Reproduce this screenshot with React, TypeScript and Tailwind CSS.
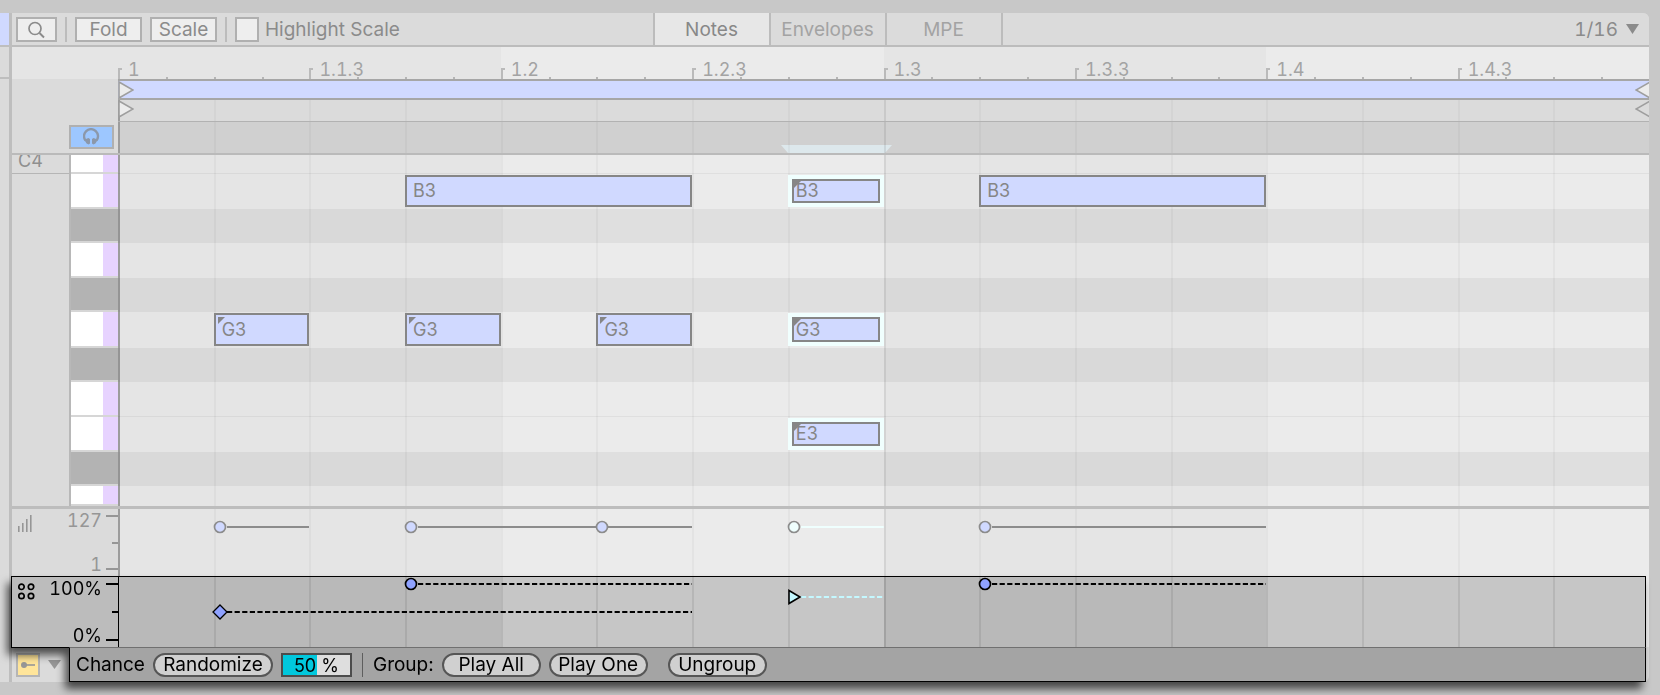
import { useState } from "react";
import type { ReactNode } from "react";

type MarkerShape = "circle" | "diamond" | "triangle";

interface Note {
    name: string;
    start: number;
    length: number;
    chance?: boolean;
    selected?: boolean;
}

interface KeyRow {
    id: string;
    height: string;
    black?: boolean;
    notes?: Note[];
}

interface LaneEvent {
    start: number;
    end: number;
    y: number;
    shape: MarkerShape;
    selected?: boolean;
}

const STEPS = 16;

const RULER_LABELS = ["1", "1.1.3", "1.2", "1.2.3", "1.3", "1.3.3", "1.4", "1.4.3"];

const ROWS: KeyRow[] = [
    { id: "C4", height: "h-[19px]" },
    {
        id: "B3",
        height: "h-[35px]",
        notes: [
            { name: "B3", start: 3, length: 3 },
            { name: "B3", start: 7, length: 1, chance: true, selected: true },
            { name: "B3", start: 9, length: 3 },
        ],
    },
    { id: "A#3", height: "h-[34px]", black: true },
    { id: "A3", height: "h-[35px]" },
    { id: "G#3", height: "h-[34px]", black: true },
    {
        id: "G3",
        height: "h-9",
        notes: [
            { name: "G3", start: 1, length: 1, chance: true },
            { name: "G3", start: 3, length: 1, chance: true },
            { name: "G3", start: 5, length: 1, chance: true },
            { name: "G3", start: 7, length: 1, chance: true, selected: true },
        ],
    },
    { id: "F#3", height: "h-[34px]", black: true },
    { id: "F3", height: "h-[35px]" },
    {
        id: "E3",
        height: "h-[35px]",
        notes: [{ name: "E3", start: 7, length: 1, chance: true, selected: true }],
    },
    { id: "D#3", height: "h-[34px]", black: true },
    { id: "D3", height: "h-5" },
];

const VELOCITY: LaneEvent[] = [
    { start: 1, end: 2, y: 18, shape: "circle" },
    { start: 3, end: 6, y: 18, shape: "circle" },
    { start: 5, end: 6, y: 18, shape: "circle" },
    { start: 7, end: 8, y: 18, shape: "circle", selected: true },
    { start: 9, end: 12, y: 18, shape: "circle" },
];

const CHANCE: LaneEvent[] = [
    { start: 1, end: 6, y: 35, shape: "diamond" },
    { start: 3, end: 6, y: 7, shape: "circle" },
    { start: 7, end: 8, y: 20, shape: "triangle", selected: true },
    { start: 9, end: 12, y: 7, shape: "circle" },
];

const pct = (steps: number) => `${(steps / STEPS) * 100}%`;

/** Vertical step lines, optionally with alternating beat shading. */
function StepGrid({ tone }: { tone: "plain" | "light" | "dark" }) {
    return (
        <div className="absolute inset-0 grid grid-cols-16" aria-hidden="true">
            {Array.from({ length: STEPS }, (_, i) => {
                const odd = Math.floor(i / 4) % 2 === 1;
                let fill = "";
                if (tone === "light") fill = odd ? "bg-[#ebebeb]" : "bg-[#e5e5e5]";
                if (tone === "dark") fill = odd ? "bg-[#c6c6c6]" : "bg-[#b9b9b9]";
                let line = i === 8 ? "border-black/8" : "border-black/3";
                if (tone === "dark") line = i === 8 ? "border-black/12" : "border-black/8";
                if (i === 0) line = tone === "dark" ? "border-black" : "border-[#9c9c9c]";
                return (
                    <div
                        key={i}
                        className={`${i === 0 && tone === "dark" ? "border-l" : "border-l-2"} ${line} ${fill}`}
                    />
                );
            })}
        </div>
    );
}

function Flag({ side, filled = true }: { side: "left" | "right"; filled?: boolean }) {
    return (
        <svg
            width="16"
            height="18"
            viewBox="0 0 16 18"
            className={side === "right" ? "rotate-180" : ""}
            aria-hidden="true"
        >
            <path
                d="M1 1 L15 9 L1 17 Z"
                fill={filled ? "#ececec" : "none"}
                stroke="#9e9e9e"
                strokeWidth="1.6"
            />
        </svg>
    );
}

function Divider() {
    return <div className="h-[25px] w-0.5 bg-[#bcbcbc]" />;
}

function Toolbar() {
    const [tab, setTab] = useState("Notes");
    const box = "h-[25px] border-2 border-[#b0b0b0] bg-[#eeeeee]";

    return (
        <div className="flex items-start rounded-tr-md border-b-2 border-[#bcbcbc] bg-[#dbdbdb] leading-[21px] text-[#8b8b8b]">
            <div className="flex flex-1 items-center gap-2 pt-1 pl-1">
                <button
                    type="button"
                    aria-label="Search"
                    className={`${box} flex w-[41px] items-center justify-center`}
                >
                    <svg width="18" height="18" viewBox="0 0 18 18" fill="none" aria-hidden="true">
                        <circle cx="7" cy="7.5" r="6" stroke="#8b8b8b" strokeWidth="1.7" />
                        <path d="M11.5 12 L16 16.5" stroke="#8b8b8b" strokeWidth="1.9" />
                    </svg>
                </button>
                <Divider />
                <button type="button" className={`${box} w-[67px]`}>
                    Fold
                </button>
                <button type="button" className={`${box} w-[67px]`}>
                    Scale
                </button>
                <Divider />
                <label className="flex items-center gap-1.5">
                    <input type="checkbox" className={`${box} w-6 appearance-none`} />
                    Highlight Scale
                </label>
            </div>
            <div className="flex border-l-2 border-[#bcbcbc]" role="tablist">
                {["Notes", "Envelopes", "MPE"].map((name) => (
                    <button
                        key={name}
                        type="button"
                        role="tab"
                        aria-selected={tab === name}
                        onClick={() => setTab(name)}
                        className={`h-8 w-[116px] border-r-2 border-[#bcbcbc] ${
                            tab === name ? "bg-[#e7e7e7] text-[#888888]" : "text-[#a3a3a3]"
                        }`}
                    >
                        {name}
                    </button>
                ))}
            </div>
            <div className="flex h-8 flex-1 items-center justify-end gap-2 pr-2.5">
                <select
                    aria-label="Grid"
                    defaultValue="1/16"
                    className="w-12 appearance-none text-right tabular-nums"
                >
                    <option>1/8</option>
                    <option>1/16</option>
                    <option>1/32</option>
                </select>
                <svg width="13" height="10" viewBox="0 0 13 10" aria-hidden="true">
                    <path d="M0 0 H13 L6.5 10 Z" fill="#8b8b8b" />
                </svg>
            </div>
        </div>
    );
}

function Ruler() {
    return (
        <div className="flex h-8 bg-[#e5e5e5]">
            <div className="w-[106px] shrink-0" />
            <div className="grid flex-1 grid-cols-8">
                {RULER_LABELS.map((label, i) => (
                    <div
                        key={label}
                        className={`relative flex flex-col justify-end pl-2.5 text-[18px] text-[#a3a3a3] tabular-nums ${
                            Math.floor(i / 2) % 2 === 1 ? "bg-[#ebebeb]" : "bg-[#e5e5e5]"
                        }`}
                    >
                        <span className="leading-[19px]">{label}</span>
                        <span className="absolute bottom-0 left-0 h-[11px] w-1 border-t-2 border-l-2 border-[#bababa]" />
                        {["left-1/4", "left-1/2", "left-3/4"].map((pos) => (
                            <span
                                key={pos}
                                className={`absolute bottom-0 ${pos} h-0.5 w-0.5 bg-[#b5b5b5]`}
                            />
                        ))}
                    </div>
                ))}
            </div>
        </div>
    );
}

function LoopArea() {
    return (
        <div className="flex">
            <div className="flex w-[106px] shrink-0 items-end justify-end border-b-2 border-[#bababa] pr-1 pb-1">
                <button
                    type="button"
                    aria-label="Preview"
                    className="flex h-6 w-[45px] items-center justify-center border-2 border-[#b0b0b0] bg-[#9dc7ff]"
                >
                    <svg width="18" height="18" viewBox="0 0 18 18" fill="none" aria-hidden="true">
                        <path
                            d="M2.6 12.6 A7 7 0 1 1 13.4 12.6"
                            stroke="#8c98aa"
                            strokeWidth="2.4"
                        />
                        <path
                            d="M1.2 11.8 L5.4 10 L7 11 V15.6 L5.6 16.6 L3.6 15.4 Z M14.8 11.8 L10.6 10 L9 11 V15.6 L10.4 16.6 L12.4 15.4 Z"
                            fill="#8c98aa"
                        />
                    </svg>
                </button>
            </div>
            <div className="flex-1">
                <div className="flex h-[21px] items-center justify-between overflow-hidden border-y-2 border-[#a6a6a6] bg-[#d0d9ff]">
                    <Flag side="left" />
                    <div className="-mr-0.5 flex">
                        <Flag side="right" />
                    </div>
                </div>
                <div className="relative h-[22px] border-b border-[#b2b2b2] bg-[#dbdbdb]">
                    <StepGrid tone="plain" />
                    <div className="relative flex h-full items-start justify-between overflow-hidden">
                        <Flag side="left" />
                        <div className="-mr-0.5 flex">
                            <Flag side="right" filled={false} />
                        </div>
                    </div>
                </div>
                <div className="relative h-[33px] border-b-2 border-[#bababa] bg-[#d0d0d0]">
                    <div
                        className="absolute bottom-0 flex h-2 bg-[#dde8ec]"
                        style={{ left: pct(7), width: pct(1) }}
                    >
                        <svg
                            width="8"
                            height="8"
                            viewBox="0 0 8 8"
                            className="absolute right-full"
                            aria-hidden="true"
                        >
                            <path d="M1 0 H8 V8 Z" fill="#dde8ec" />
                        </svg>
                        <svg
                            width="8"
                            height="8"
                            viewBox="0 0 8 8"
                            className="absolute left-full"
                            aria-hidden="true"
                        >
                            <path d="M0 0 H8 L1 8 H0 Z" fill="#dde8ec" />
                        </svg>
                    </div>
                    <StepGrid tone="plain" />
                </div>
            </div>
        </div>
    );
}

function NoteBlock({ note }: { note: Note }) {
    return (
        <div
            className={`absolute top-px bottom-0.5 ${note.selected ? "border-4 border-[#f0fffe]" : ""}`}
            style={{ left: pct(note.start), width: pct(note.length) }}
        >
            <div
                className={`relative flex h-full items-center border-2 border-[#868686] bg-[#d0d9ff] text-[18px] leading-5 text-[#868686] ${
                    note.selected ? "pl-0.5" : "pl-1.5"
                }`}
            >
                {note.chance && (
                    <svg
                        width="8"
                        height="8"
                        viewBox="0 0 8 8"
                        className={`absolute ${note.selected ? "top-0 left-0" : "top-0.5 left-0.5"}`}
                        aria-hidden="true"
                    >
                        <path d="M0 0 H7 L0 7 Z" fill="#868686" />
                    </svg>
                )}
                <span className="relative">{note.name}</span>
            </div>
        </div>
    );
}

function PianoRoll() {
    return (
        <div className="flex border-b-[3px] border-[#bdbdbd]">
            <div className="w-[57px] shrink-0 text-[#8f8f8f]">
                <div className="flex h-[19px] items-end overflow-hidden border-b border-[#b5b5b5] pl-1.5 text-[18px] leading-5">
                    <span className="pb-0.5">C4</span>
                </div>
            </div>
            <div className="flex w-[49px] shrink-0 flex-col border-l-2 border-[#b8b8b8]">
                {ROWS.map((row) => (
                    <div
                        key={row.id}
                        className={`${row.height} flex border-b-2 border-[#d6d6d6] ${
                            row.black ? "bg-[#b3b3b3]" : "bg-white"
                        }`}
                    >
                        {!row.black && <div className="ml-auto h-full w-[15px] bg-[#e7d3ff]" />}
                    </div>
                ))}
            </div>
            <div className="relative flex-1">
                <StepGrid tone="light" />
                {ROWS.map((row) => (
                    <div
                        key={row.id}
                        className={`${row.height} relative ${row.black ? "bg-black/5" : ""} ${
                            row.id === "C4" || row.id === "F3" ? "border-b border-black/5" : ""
                        }`}
                    >
                        {row.notes?.map((note) => (
                            <NoteBlock key={note.start} note={note} />
                        ))}
                    </div>
                ))}
            </div>
        </div>
    );
}

function Marker({ shape, fill, stroke }: { shape: MarkerShape; fill: string; stroke: string }) {
    return (
        <svg
            width="16"
            height="16"
            viewBox="0 0 16 16"
            className="absolute -top-2 -left-0.5"
            aria-hidden="true"
        >
            {shape === "circle" && (
                <circle cx="8" cy="8" r="5.5" fill={fill} stroke={stroke} strokeWidth="1.7" />
            )}
            {shape === "diamond" && (
                <path d="M8 1 L15 8 L8 15 L1 8 Z" fill={fill} stroke={stroke} strokeWidth="1.3" />
            )}
            {shape === "triangle" && (
                <path d="M3 1.5 L14 8 L3 14.5 Z" fill={fill} stroke={stroke} strokeWidth="1.6" />
            )}
        </svg>
    );
}

function LaneEvents({ events, dashed }: { events: LaneEvent[]; dashed?: boolean }) {
    return (
        <>
            {events.map((event) => {
                const stroke = dashed ? "#000000" : "#8c8c8c";
                const fill = dashed ? "#8fa2ff" : "#d0d9ff";
                const pale = dashed ? "#c4f8ff" : "#effffe";
                return (
                    <div
                        key={`${event.start}-${event.y}`}
                        className="absolute"
                        style={{
                            left: pct(event.start),
                            width: pct(event.end - event.start),
                            top: event.y,
                        }}
                    >
                        <svg
                            width="100%"
                            height="2"
                            className="absolute -top-px left-0"
                            aria-hidden="true"
                        >
                            <line
                                x1="13"
                                y1="1"
                                x2="100%"
                                y2="1"
                                stroke={event.selected ? pale : stroke}
                                strokeWidth="1.8"
                                strokeDasharray={dashed ? "5.2 2.4" : undefined}
                            />
                        </svg>
                        <Marker
                            shape={event.shape}
                            fill={event.selected ? pale : fill}
                            stroke={stroke}
                        />
                    </div>
                );
            })}
        </>
    );
}

function LaneScale({
    icon,
    max,
    min,
    className,
}: {
    icon: ReactNode;
    max: string;
    min: string;
    className: string;
}) {
    return (
        <div className={`flex w-[106px] shrink-0 justify-between ${className}`}>
            <div className="pt-1.5 pl-1.5">{icon}</div>
            <div className="flex">
                <div className="flex flex-col justify-between pt-px pr-1 text-right text-[18px] leading-[22px] tabular-nums">
                    <span>{max}</span>
                    <span>{min}</span>
                </div>
                <div className="flex flex-col items-end justify-between py-1.5">
                    <span className="h-0.5 w-3 bg-current" />
                    <span className="h-0.5 w-1.5 bg-current" />
                    <span className="h-0.5 w-3 bg-current" />
                </div>
            </div>
        </div>
    );
}

function VelocityLane() {
    return (
        <div className="flex h-[67px]">
            <LaneScale
                className="text-[#969696]"
                max="127"
                min="1"
                icon={
                    <svg width="14" height="17" viewBox="0 0 14 17" aria-hidden="true">
                        <path
                            d="M0 11 h1.6 v6 h-1.6 Z M4 8 h1.6 v9 h-1.6 Z M8 4 h1.6 v13 h-1.6 Z M12 0 h1.6 v17 h-1.6 Z"
                            fill="#969696"
                        />
                    </svg>
                }
            />
            <div className="relative flex-1">
                <StepGrid tone="light" />
                <LaneEvents events={VELOCITY} />
            </div>
        </div>
    );
}

function ChanceLane() {
    return (
        <div className="-ml-px overflow-hidden border-x border-t border-black bg-[#bcbcbc]">
            <div className="flex h-[70px] w-[calc(100%+4px)]">
                <LaneScale
                    className="text-black"
                    max="100%"
                    min="0%"
                    icon={
                        <svg width="17" height="17" viewBox="0 0 17 17" fill="none" aria-hidden="true">
                            <g stroke="#000000" strokeWidth="1.7">
                                <circle cx="3.5" cy="3.8" r="2.7" />
                                <circle cx="13" cy="3.8" r="2.7" />
                                <circle cx="3.5" cy="13" r="2.7" />
                                <circle cx="13" cy="13" r="2.7" />
                            </g>
                        </svg>
                    }
                />
                <div className="relative flex-1">
                    <StepGrid tone="dark" />
                    <LaneEvents events={CHANCE} dashed />
                </div>
            </div>
        </div>
    );
}

function Pill({ children, wide }: { children: ReactNode; wide?: boolean }) {
    return (
        <button
            type="button"
            className={`h-6 rounded-full border-2 border-[#565656] bg-[#d0d0d0] leading-5 ${
                wide ? "w-[120px]" : "w-[99px]"
            }`}
        >
            {children}
        </button>
    );
}

function ChanceControls() {
    const [amount, setAmount] = useState("50 %");
    const level = Math.min(100, Math.max(0, parseInt(amount, 10) || 0));

    return (
        <div className="flex h-[35px] flex-1 items-center gap-2 border border-t-[#707070] border-r-black border-b-black border-l-black bg-[#a4a4a4] pt-px pl-1.5 text-black">
            <span>Chance</span>
            <Pill wide>Randomize</Pill>
            <input
                type="text"
                aria-label="Randomize amount"
                value={amount}
                onChange={(e) => setAmount(e.target.value)}
                className="h-6 w-[71px] border-2 border-[#4c4c4c] text-center text-[18px] leading-5"
                style={{
                    backgroundImage: `linear-gradient(to right, #00c8dd ${level}%, #dedede ${level}%)`,
                }}
            />
            <div className="mx-0.5 h-6 w-px bg-[#5e5e5e]" />
            <span>Group:</span>
            <Pill>Play All</Pill>
            <Pill>Play One</Pill>
            <div className="ml-3 flex">
                <Pill>Ungroup</Pill>
            </div>
        </div>
    );
}

/** Chance lane and its control bar, raised above the rest of the editor. */
function ChanceSection() {
    return (
        <div className="grid grid-cols-[57px_1fr] grid-rows-[1fr_auto]">
            <div className="col-span-2 col-start-1 row-start-1 bg-[#ebebeb]" />
            <div className="col-start-1 row-start-2 flex h-[35px] items-center gap-2 pl-1">
                <button
                    type="button"
                    aria-label="Show lanes"
                    className="flex size-6 items-center border-2 border-[#b5b5b5] bg-[#ffe59a] pl-[3px]"
                >
                    <svg width="14" height="6" viewBox="0 0 14 6" aria-hidden="true">
                        <circle cx="3" cy="3" r="3" fill="#969696" />
                        <path d="M3 2.2 H14 V3.8 H3 Z" fill="#969696" />
                    </svg>
                </button>
                <svg width="13" height="9" viewBox="0 0 13 9" aria-hidden="true">
                    <path d="M0 0 H13 L6.5 9 Z" fill="#969696" />
                </svg>
            </div>
            <div className="pointer-events-none col-span-2 col-start-1 row-span-2 row-start-1 mr-[3px] drop-shadow-[-4px_7px_4px_rgba(0,0,0,0.65)]">
                <ChanceLane />
                <div className="-ml-px flex">
                    <div className="w-[58px] border-t border-black" />
                    <div className="pointer-events-auto flex flex-1">
                        <ChanceControls />
                    </div>
                </div>
            </div>
        </div>
    );
}

export default function App() {
    return (
        <div className="flex min-h-screen flex-col overflow-hidden bg-[#c8c8c8] pt-[13px] pr-[11px] font-['Inter','Liberation_Sans',sans-serif] text-[19px]">
            <div className="flex">
                <div className="w-[9px] shrink-0 bg-[#dbdbdb]">
                    <div className="h-8 bg-[#d0d9ff]" />
                    <div className="h-[34px] border-y-2 border-[#bebebe]" />
                </div>
                <main className="min-w-0 flex-1 rounded-r-md border-l-[3px] border-[#bebebe] bg-[#dbdbdb]">
                    <Toolbar />
                    <Ruler />
                    <LoopArea />
                    <PianoRoll />
                    <VelocityLane />
                    <ChanceSection />
                </main>
            </div>
        </div>
    );
}
